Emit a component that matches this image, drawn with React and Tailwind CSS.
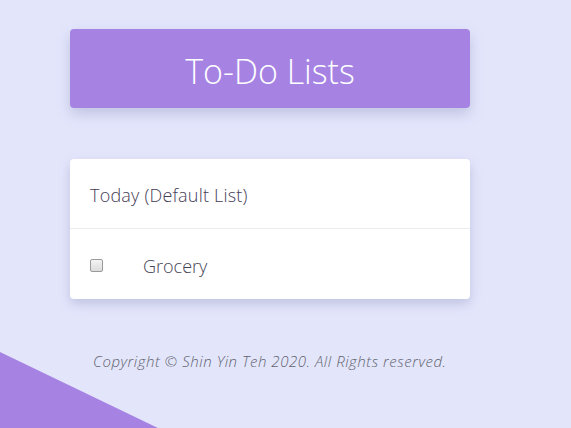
export default function App() {
  return (
    <div className="relative w-[571px] h-[428px] overflow-hidden bg-[#e3e6fb]" style={{ fontFamily: '"Open Sans", "Noto Sans", sans-serif' }}>
      <svg className="absolute left-0 bottom-0" width="160" height="76" viewBox="0 0 160 76">
        <polygon points="0,0 0,76 158,76" fill="#a683e3" />
      </svg>
      <div className="relative flex flex-col w-[400px] ml-[70px] pt-[29px]">
        <div className="h-[79px] rounded-[4px] bg-[#a683e3] flex items-center justify-center shadow-[0_6px_14px_rgba(90,90,150,0.25)]">
          <h1 className="text-white text-[34px] font-light leading-none pt-[4px]">To-Do Lists</h1>
        </div>
        <div className="mt-[51px] bg-white rounded-[4px] shadow-[0_5px_12px_rgba(90,90,150,0.25)]">
          <div className="h-[70px] flex items-center px-[20px] border-b border-[#ececf0]">
            <span className="text-[18px] font-light tracking-[0.2px] text-[#463d58] pt-[3px]">Today (Default List)</span>
          </div>
          <div className="h-[70px] flex items-center px-[20px]">
            <span className="w-[13px] h-[13px] rounded-[2px] border border-[#9a9a9a] bg-gradient-to-b from-[#f4f4f4] to-[#dcdcdc] mt-[2px]"></span>
            <span className="ml-[40px] text-[18px] font-light text-[#454558] pt-[4px]">Grocery</span>
          </div>
        </div>
        <p className="mt-[51px] ml-[23px] italic font-light text-[15px] tracking-[0.55px] text-[#62626e]">
          Copyright © Shin Yin Teh 2020. All Rights reserved.
        </p>
      </div>
    </div>
  );
}
